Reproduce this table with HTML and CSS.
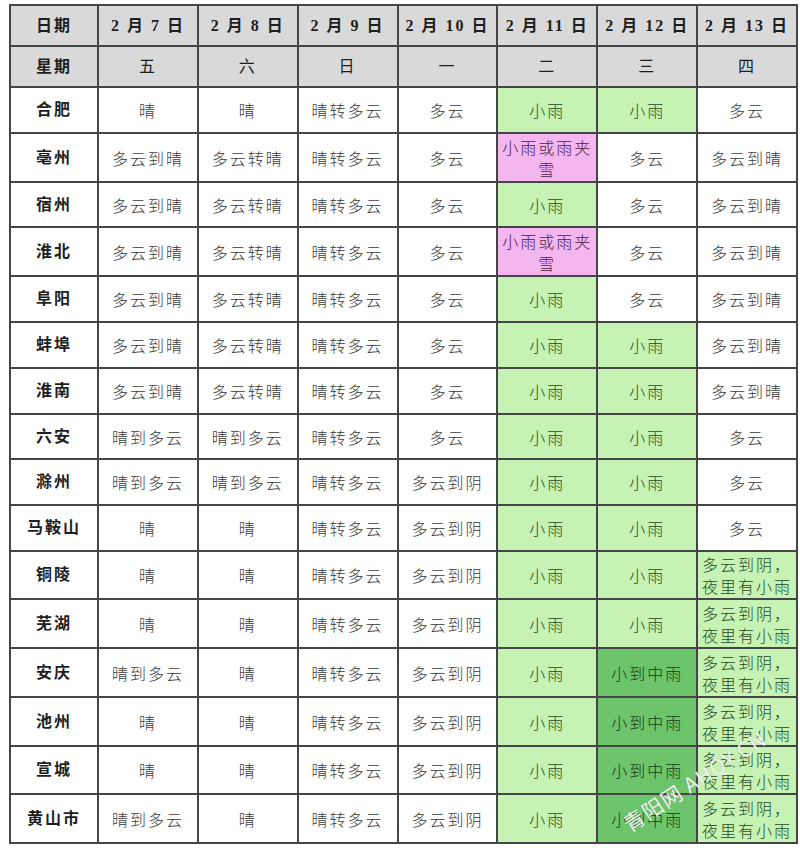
FILE: index.html
```html
<!DOCTYPE html>
<html lang="zh-CN">
<head>
<meta charset="utf-8">
<title>安徽天气预报</title>
<link rel="stylesheet" href="styles.css">
</head>
<body>
<div class="wrap">
<table class="wx">
  <colgroup>
    <col class="c-city"><col><col><col><col><col><col><col>
  </colgroup>
  <tr class="r-head">
    <th>日期</th><th>2 月 7 日</th><th>2 月 8 日</th><th>2 月 9 日</th><th>2 月 10 日</th><th>2 月 11 日</th><th>2 月 12 日</th><th>2 月 13 日</th>
  </tr>
  <tr class="r-head">
    <th>星期</th><th class="wk">五</th><th class="wk">六</th><th class="wk">日</th><th class="wk">一</th><th class="wk">二</th><th class="wk">三</th><th class="wk">四</th>
  </tr>
  <tr class="r1"><th>合肥</th><td>晴</td><td>晴</td><td>晴转多云</td><td>多云</td><td class="g">小雨</td><td class="g">小雨</td><td>多云</td></tr>
  <tr class="r2"><th>亳州</th><td>多云到晴</td><td>多云转晴</td><td>晴转多云</td><td>多云</td><td class="p">小雨或雨夹雪</td><td>多云</td><td>多云到晴</td></tr>
  <tr class="r0"><th>宿州</th><td>多云到晴</td><td>多云转晴</td><td>晴转多云</td><td>多云</td><td class="g">小雨</td><td>多云</td><td>多云到晴</td></tr>
  <tr class="r2"><th>淮北</th><td>多云到晴</td><td>多云转晴</td><td>晴转多云</td><td>多云</td><td class="p">小雨或雨夹雪</td><td>多云</td><td>多云到晴</td></tr>
  <tr class="r1"><th>阜阳</th><td>多云到晴</td><td>多云转晴</td><td>晴转多云</td><td>多云</td><td class="g">小雨</td><td>多云</td><td>多云到晴</td></tr>
  <tr class="r1"><th>蚌埠</th><td>多云到晴</td><td>多云转晴</td><td>晴转多云</td><td>多云</td><td class="g">小雨</td><td class="g">小雨</td><td>多云到晴</td></tr>
  <tr class="r1"><th>淮南</th><td>多云到晴</td><td>多云转晴</td><td>晴转多云</td><td>多云</td><td class="g">小雨</td><td class="g">小雨</td><td>多云到晴</td></tr>
  <tr class="r0"><th>六安</th><td>晴到多云</td><td>晴到多云</td><td>晴转多云</td><td>多云</td><td class="g">小雨</td><td class="g">小雨</td><td>多云</td></tr>
  <tr class="r1"><th>滁州</th><td>晴到多云</td><td>晴到多云</td><td>晴转多云</td><td>多云到阴</td><td class="g">小雨</td><td class="g">小雨</td><td>多云</td></tr>
  <tr class="r1"><th>马鞍山</th><td>晴</td><td>晴</td><td>晴转多云</td><td>多云到阴</td><td class="g">小雨</td><td class="g">小雨</td><td>多云</td></tr>
  <tr class="r3"><th>铜陵</th><td>晴</td><td>晴</td><td>晴转多云</td><td>多云到阴</td><td class="g">小雨</td><td class="g">小雨</td><td class="g">多云到阴，夜里有小雨</td></tr>
  <tr class="r2"><th>芜湖</th><td>晴</td><td>晴</td><td>晴转多云</td><td>多云到阴</td><td class="g">小雨</td><td class="g">小雨</td><td class="g">多云到阴，夜里有小雨</td></tr>
  <tr class="r2"><th>安庆</th><td>晴到多云</td><td>晴</td><td>晴转多云</td><td>多云到阴</td><td class="g">小雨</td><td class="dg">小到中雨</td><td class="g">多云到阴，夜里有小雨</td></tr>
  <tr class="r2"><th>池州</th><td>晴</td><td>晴</td><td>晴转多云</td><td>多云到阴</td><td class="g">小雨</td><td class="dg">小到中雨</td><td class="g">多云到阴，夜里有小雨</td></tr>
  <tr class="r3"><th>宣城</th><td>晴</td><td>晴</td><td>晴转多云</td><td>多云到阴</td><td class="g">小雨</td><td class="dg">小到中雨</td><td class="g">多云到阴，夜里有小雨</td></tr>
  <tr class="r2"><th>黄山市</th><td>晴到多云</td><td>晴</td><td>晴转多云</td><td>多云到阴</td><td class="g">小雨</td><td class="dg">小到中雨</td><td class="g">多云到阴，夜里有小雨</td></tr>
</table>
<div class="mark">青阳网 AHQY.CN</div>
</div>
</body>
</html>
```
FILE: styles.css
```css
html, body {
  margin: 0;
  padding: 0;
  background: #ffffff;
}
body {
  padding: 4px 0 0 9px;
  font-family: "Liberation Serif", "Noto Sans CJK SC", serif;
}
.wrap {
  position: relative;
  width: 790px;
}
.wx {
  border-collapse: collapse;
  table-layout: fixed;
  width: 789px;
}
.c-city { width: 88px; }
.wx th, .wx td {
  border: 2px solid #454545;
  text-align: center;
  vertical-align: middle;
  padding: 0 2px;
  font-size: 16px;
  letter-spacing: 2px;
  line-height: 22px;
}
.wx th {
  font-family: "Liberation Serif", "Noto Sans CJK SC", serif;
  font-weight: 700;
  color: #1e1e1e;
}
.wx td {
  font-family: "Noto Sans CJK SC", sans-serif;
  font-weight: 300;
  color: #3a3a3a;
}
.r-head { height: 41px; }
.r-head th { background: #d9d9d9; }
.r-head th.wk { font-weight: 400; }
.r0 { height: 45px; }
.r1 { height: 46px; }
.r2 { height: 49px; }
.r3 { height: 48px; }
.wx td.g {
  background: #c6f3b4;
  color: #1f4a1f;
}
.wx td.dg {
  background: #6cc56b;
  color: #163816;
}
.wx td.p {
  background: #f4b6ee;
  color: #4a2246;
}
.mark {
  position: absolute;
  left: 624px;
  top: 804px;
  line-height: 30px;
  transform: rotate(-33deg);
  transform-origin: left bottom;
  font-family: "Noto Sans CJK SC", sans-serif;
  font-size: 21px;
  letter-spacing: 1px;
  color: rgba(255, 255, 255, 0.9);
  text-shadow: 0 0 1px rgba(120, 120, 120, 0.6);
  white-space: nowrap;
  pointer-events: none;
}
```
